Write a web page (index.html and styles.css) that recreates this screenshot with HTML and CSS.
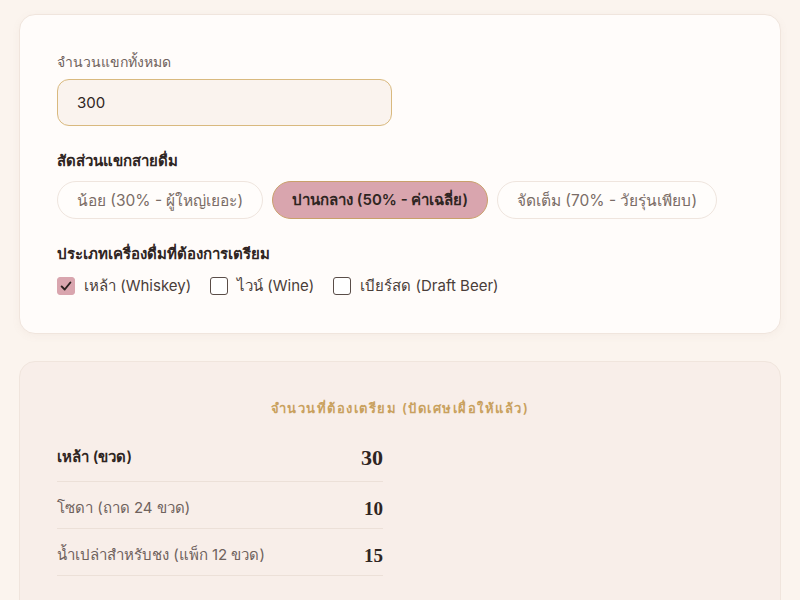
FILE: index.html
```html
<!DOCTYPE html>
<html lang="th">
<head>
  <meta charset="UTF-8" />
  <title>คำนวณเครื่องดื่มงานเลี้ยง</title>
  <meta name="viewport" content="width=device-width, initial-scale=1" />
  <link rel="stylesheet" href="styles.css">
</head>
<body>
  <div class="page">
    <div class="card form-card">
      <div class="field">
        <label class="field-label" for="guests">จำนวนแขกทั้งหมด</label>
        <input type="text" id="guests" class="text-input" value="300" />
      </div>

      <div class="field">
        <div class="section-label">สัดส่วนแขกสายดื่ม</div>
        <div class="pills">
          <button class="pill">น้อย (30% - ผู้ใหญ่เยอะ)</button>
          <button class="pill active">ปานกลาง (50% - ค่าเฉลี่ย)</button>
          <button class="pill">จัดเต็ม (70% - วัยรุ่นเพียบ)</button>
        </div>
      </div>

      <div class="field">
        <div class="section-label">ประเภทเครื่องดื่มที่ต้องการเตรียม</div>
        <div class="checks">
          <label class="check"><span class="box checked">
            <svg viewBox="0 0 16 16" width="14" height="14"><path d="M3 8.5 L6.5 12 L13 4" fill="none" stroke="#2b2220" stroke-width="2.2" stroke-linecap="round" stroke-linejoin="round"/></svg>
          </span>เหล้า (Whiskey)</label>
          <label class="check"><span class="box"></span>ไวน์ (Wine)</label>
          <label class="check"><span class="box"></span>เบียร์สด (Draft Beer)</label>
        </div>
      </div>
    </div>

    <div class="card result-card">
      <div class="result-title">จำนวนที่ต้องเตรียม (ปัดเศษเผื่อให้แล้ว)</div>
      <div class="result-grid">
        <div class="result-list">
          <div class="row main">
            <span class="row-label">เหล้า (ขวด)</span>
            <span class="row-value">30</span>
          </div>
          <div class="row">
            <span class="row-label">โซดา (ถาด 24 ขวด)</span>
            <span class="row-value">10</span>
          </div>
          <div class="row">
            <span class="row-label">น้ำเปล่าสำหรับชง (แพ็ก 12 ขวด)</span>
            <span class="row-value">15</span>
          </div>
        </div>
        <div></div>
      </div>
    </div>
  </div>
</body>
</html>
```

FILE: styles.css
```css
:root {
  --bg: #fbf4ee;
  --card: #fffcfa;
  --card-alt: #f8eee9;
  --border: #f0e5dd;
  --gold: #c9a15e;
  --pink: #d9a5ae;
  --text: #2f2522;
  --muted: #6f625d;
}

* {
  box-sizing: border-box;
  margin: 0;
  padding: 0;
}

body {
  font-family: Inter, 'Noto Sans', sans-serif;
  background: var(--bg);
  color: var(--text);
}

.page {
  padding: 14px 19px 0;
  display: flex;
  flex-direction: column;
  gap: 27px;
}

.card {
  border: 1px solid var(--border);
  border-radius: 16px;
  padding: 36px 37px;
}

.form-card {
  background: var(--card);
  padding-bottom: 35px;
  display: flex;
  flex-direction: column;
  gap: 23px;
  box-shadow: 0 2px 8px rgba(160, 120, 100, 0.06);
}

.field {
  display: flex;
  flex-direction: column;
}

.field-label {
  font-size: 14px;
  color: var(--muted);
  margin-bottom: 6px;
}

.text-input {
  width: 335px;
  height: 47px;
  padding: 0 19px;
  border: 1px solid #d9b97e;
  border-radius: 12px;
  background: #faf3ee;
  font-family: inherit;
  font-size: 15px;
  color: var(--text);
  outline: none;
}

.section-label {
  font-size: 15px;
  font-weight: 600;
  color: var(--text);
  margin-bottom: 8px;
}

.pills {
  display: flex;
  gap: 9px;
}

.pill {
  height: 38px;
  padding: 0 19px;
  border: 1px solid #efe5de;
  border-radius: 999px;
  background: #fffdfb;
  font-family: inherit;
  font-size: 15.5px;
  color: #7a6c66;
  cursor: pointer;
}

.pill.active {
  background: var(--pink);
  border-color: #c9a06b;
  color: var(--text);
  font-weight: 600;
  font-size: 15px;
}

.checks {
  display: flex;
  gap: 19px;
}

.check {
  display: flex;
  align-items: center;
  gap: 9px;
  font-size: 15px;
  color: #4a3d39;
}

.box {
  width: 18px;
  height: 18px;
  border: 1.5px solid #5a4d48;
  border-radius: 3px;
  background: #fff;
  display: flex;
  align-items: center;
  justify-content: center;
}

.box.checked {
  background: var(--pink);
  border-color: var(--pink);
}

.result-card {
  background: var(--card-alt);
  padding-top: 36px;
  height: 260px;
}

.result-title {
  text-align: center;
  color: var(--gold);
  font-size: 13px;
  font-weight: 600;
  letter-spacing: 1.5px;
  margin-bottom: 24px;
}

.result-grid {
  display: grid;
  grid-template-columns: 1fr 1fr;
  gap: 34px;
}

.row {
  display: flex;
  justify-content: space-between;
  align-items: flex-end;
  height: 47px;
  padding-bottom: 8px;
  border-bottom: 1px solid #ece0d8;
  font-size: 15px;
  color: var(--muted);
}

.row:first-child {
  height: 39px;
  padding-top: 2px;
  padding-bottom: 10px;
}

.row.main .row-label {
  color: var(--text);
  font-weight: 600;
  align-self: flex-start;
}

.row-value {
  font-family: 'Liberation Serif', 'DejaVu Serif', serif;
  font-weight: 700;
  font-size: 19px;
  color: var(--text);
}

.row.main .row-value {
  font-size: 22px;
}
```
